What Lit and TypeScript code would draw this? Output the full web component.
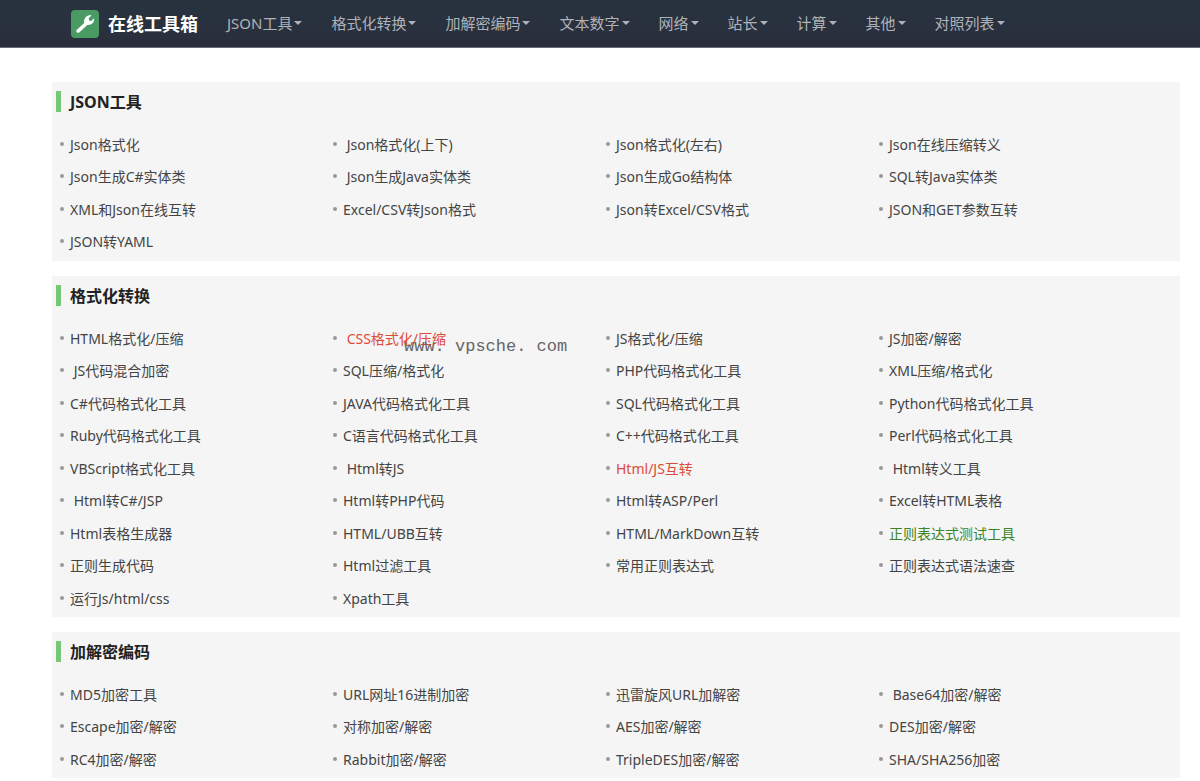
import { LitElement, html, css } from "lit";
import { customElement, property } from "lit/decorators.js";
import { classMap } from "lit/directives/class-map.js";

interface Tool {
  name: string;
  tone?: "hot" | "fresh";
  spaced?: boolean;
}

interface Group {
  title: string;
  tools: Tool[];
}

const t = (name: string): Tool => ({ name });
// Entry whose label starts after a blank.
const s = (name: string): Tool => ({ name, spaced: true });

const MENUS = ["JSON工具", "格式化转换", "加解密编码", "文本数字", "网络", "站长", "计算", "其他", "对照列表"];

const GROUPS: Group[] = [
  {
    title: "JSON工具",
    tools: [
      t("Json格式化"), s("Json格式化(上下)"), t("Json格式化(左右)"), t("Json在线压缩转义"),
      t("Json生成C#实体类"), s("Json生成Java实体类"), t("Json生成Go结构体"), t("SQL转Java实体类"),
      t("XML和Json在线互转"), t("Excel/CSV转Json格式"), t("Json转Excel/CSV格式"), t("JSON和GET参数互转"),
      t("JSON转YAML"),
    ],
  },
  {
    title: "格式化转换",
    tools: [
      t("HTML格式化/压缩"), { name: "CSS格式化/压缩", tone: "hot", spaced: true }, t("JS格式化/压缩"), t("JS加密/解密"),
      s("JS代码混合加密"), t("SQL压缩/格式化"), t("PHP代码格式化工具"), t("XML压缩/格式化"),
      t("C#代码格式化工具"), t("JAVA代码格式化工具"), t("SQL代码格式化工具"), t("Python代码格式化工具"),
      t("Ruby代码格式化工具"), t("C语言代码格式化工具"), t("C++代码格式化工具"), t("Perl代码格式化工具"),
      t("VBScript格式化工具"), s("Html转JS"), { name: "Html/JS互转", tone: "hot" }, s("Html转义工具"),
      s("Html转C#/JSP"), t("Html转PHP代码"), t("Html转ASP/Perl"), t("Excel转HTML表格"),
      t("Html表格生成器"), t("HTML/UBB互转"), t("HTML/MarkDown互转"), { name: "正则表达式测试工具", tone: "fresh" },
      t("正则生成代码"), t("Html过滤工具"), t("常用正则表达式"), t("正则表达式语法速查"),
      t("运行Js/html/css"), t("Xpath工具"),
    ],
  },
  {
    title: "加解密编码",
    tools: [
      t("MD5加密工具"), t("URL网址16进制加密"), t("迅雷旋风URL加解密"), s("Base64加密/解密"),
      t("Escape加密/解密"), t("对称加密/解密"), t("AES加密/解密"), t("DES加密/解密"),
      t("RC4加密/解密"), t("Rabbit加密/解密"), t("TripleDES加密/解密"), t("SHA/SHA256加密"),
    ],
  },
];

@customElement("site-header")
class SiteHeader extends LitElement {
  static styles = css`
    :host {
      display: block;
    }
    .bar {
      display: flex;
      align-items: center;
      height: 47px;
      padding-left: 71px;
      background: linear-gradient(#28333f, #2a2e3d);
      border-bottom: 1px solid #686a78;
    }
    .brand {
      display: flex;
      align-items: center;
      gap: 9px;
      margin-right: 14px;
      color: #fff;
      font-size: 18px;
      font-weight: 700;
      line-height: 28px;
      text-decoration: none;
      white-space: nowrap;
    }
    .logo {
      display: block;
      width: 28px;
      height: 28px;
    }
    .menus {
      display: flex;
    }
    .menu {
      display: flex;
      align-items: center;
      gap: 2px;
      padding: 0 14px 2px 15px;
      border: 0;
      background: none;
      color: #afb3b9;
      font: inherit;
      font-size: 15px;
      line-height: 28px;
      white-space: nowrap;
      cursor: pointer;
    }
    .menu:hover {
      color: #fff;
    }
    .caret {
      border: 4px solid transparent;
      border-top-color: currentColor;
      border-bottom: 0;
    }
  `;

  render() {
    return html`
      <header class="bar">
        <a class="brand" href="#">
          <svg class="logo" viewBox="0 0 28 28" aria-hidden="true">
            <rect width="28" height="28" rx="4" fill="#4a9a63" />
            <path
              d="M5.6 20.1 13.2 12.9C12.5 9 15.2 5.2 19.6 5L20.5 5.5 17.7 8.3 18.1 10.6 20.3 10.9 23 8.2C23.8 12.2 20.5 15.4 16.3 14.9L8.2 22.4C6.6 23.7 4.2 21.6 5.6 20.1Z"
              fill="#fff"
            />
          </svg>
          <span>在线工具箱</span>
        </a>
        <nav class="menus">
          ${MENUS.map((m) => html`<button class="menu" type="button" aria-haspopup="true">${m}<span class="caret"></span></button>`)}
        </nav>
      </header>
    `;
  }
}

@customElement("tool-group")
class ToolGroup extends LitElement {
  @property({ attribute: false }) group!: Group;

  static styles = css`
    :host {
      display: block;
    }
    .panel {
      padding: 9px 18px 2px 4px;
      background: #f5f5f5;
    }
    .title {
      margin: 0 0 17px;
      padding: 1px 0 0 9px;
      border-left: 5px solid #76c877;
      color: #222;
      font-size: 16px;
      font-weight: 700;
      line-height: 20px;
    }
    .list {
      display: grid;
      grid-template-columns: repeat(4, 1fr);
      grid-auto-rows: 32px 33px;
      margin: 0;
      padding: 0 0 0 14px;
      list-style: none;
    }
    .item {
      position: relative;
      line-height: 32px;
      white-space: pre;
    }
    .item::before {
      content: "";
      position: absolute;
      left: -10px;
      top: 13px;
      width: 4px;
      height: 4px;
      border-radius: 50%;
      background: #999;
    }
    .link {
      color: #444;
      font-size: 14px;
      text-decoration: none;
    }
    .link:hover {
      text-decoration: underline;
    }
    .hot {
      color: #dd4b39;
    }
    .fresh {
      color: #3c8527;
    }
  `;

  render() {
    return html`
      <section class="panel">
        <h2 class="title">${this.group.title}</h2>
        <ul class="list">
          ${this.group.tools.map(
            (tool) => html`<li class="item">${tool.spaced ? " " : ""}<a
                class=${classMap({ link: true, hot: tool.tone === "hot", fresh: tool.tone === "fresh" })}
                href="#">${tool.name}</a></li>`,
          )}
        </ul>
      </section>
    `;
  }
}

@customElement("app-root")
class AppRoot extends LitElement {
  static styles = css`
    :host {
      display: block;
      position: relative;
      background: #fff;
      font-family: "Noto Sans", "Noto Sans CJK SC", sans-serif;
      font-size: 14px;
    }
    .content {
      display: flex;
      flex-direction: column;
      gap: 15px;
      padding: 34px 20px 1px 52px;
    }
    .watermark {
      position: absolute;
      left: 404px;
      top: 335px;
      color: #666;
      font-family: "Liberation Mono", monospace;
      font-size: 17px;
      line-height: 24px;
      white-space: pre;
      pointer-events: none;
    }
  `;

  render() {
    return html`
      <site-header></site-header>
      <main class="content">${GROUPS.map((g) => html`<tool-group .group=${g}></tool-group>`)}</main>
      <span class="watermark">www. vpsche. com</span>
    `;
  }
}
